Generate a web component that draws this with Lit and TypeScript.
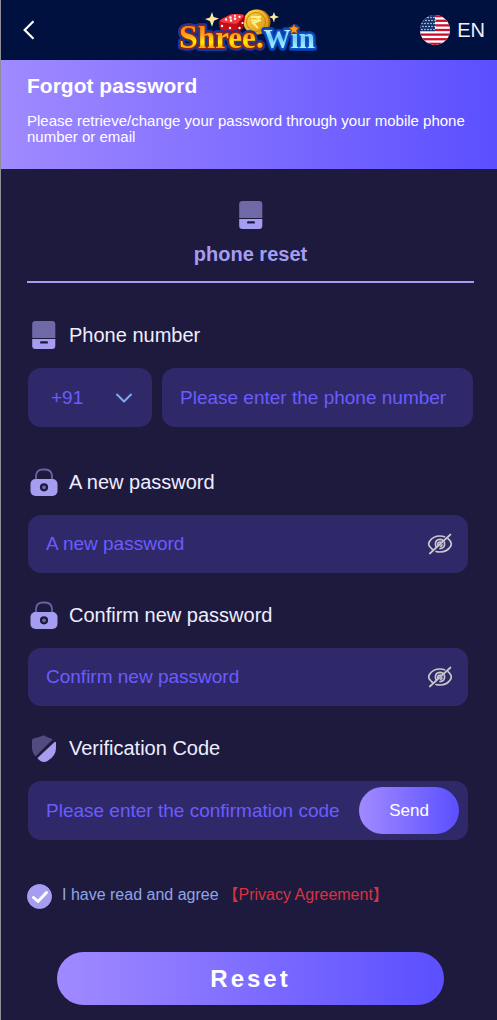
import { LitElement, html, svg, css, nothing } from "lit";
import { customElement, property, state } from "lit/decorators.js";

type IconName = "phone" | "lock" | "shield";

const icons = {
  phone: svg`
    <path fill="#7069a8" d="M5.500 0H22q3.300 0 3.300 3.300V17H2.200V3.300Q2.200 0 5.500 0z"/>
    <path fill="#a59df0" d="M2.200 18h23.100v6.700q0 3.300-3.300 3.300H5.500q-3.300 0-3.300-3.300z"/>
    <rect x="10" y="20.200" width="8" height="2.400" rx="1.200" fill="#1e1a3e"/>`,
  lock: svg`
    <path d="M6 11V8.500q0-7 7-7h2q7 0 7 7V11" fill="none" stroke="#6a61a4" stroke-width="1.800"/>
    <rect x="0.500" y="11" width="27" height="17" rx="5" fill="#a59df0"/>
    <circle cx="14" cy="19.300" r="3" fill="#7069a8" stroke="#1e1a3e" stroke-width="2.200"/>`,
  shield: svg`
    <path fill="#524b80" d="M13.800 1.300Q17 3.500 22.800 5.200L5.500 22.500Q2 18.500 2 14V6.500Q2 4.500 4 4.200 9.500 3.300 13.800 1.300z"/>
    <path fill="#a59df0" d="M24.300 8.200Q26 7 26 9v5q0 8-8.500 13-3.500 2-7 0L8 25q-.7-.7 0-1.400z"/>`,
};

@customElement("field-icon")
class FieldIcon extends LitElement {
  @property() name: IconName = "phone";

  static styles = css`
    :host { display: block; width: 28px; height: 28px; flex: none; }
    svg { display: block; }
  `;

  render() {
    return html`<svg width="28" height="28" viewBox="0 0 28 28" aria-hidden="true">${icons[this.name]}</svg>`;
  }
}

@customElement("brand-logo")
class BrandLogo extends LitElement {
  static styles = css`
    :host { display: block; }
    svg { display: block; }
    .word {
      font-family: "Liberation Serif", serif; font-weight: 700;
      paint-order: stroke; stroke-width: 3px; stroke-linejoin: round;
      filter: drop-shadow(1px 0 0 #0a3aa8) drop-shadow(-1px 0 0 #0a3aa8)
        drop-shadow(0 1px 0 #0a3aa8) drop-shadow(0 -1px 0 #0a3aa8);
    }
    .cap { font-size: 34px; }
    .low { font-size: 31px; }
    .win-cap { font-size: 27px; }
    .win-low { font-size: 29px; }
    .gold { fill: url(#gold); stroke: #8b2512; }
    .ice { fill: url(#ice); stroke: #0c56c4; }
  `;

  render() {
    return html`<svg width="150" height="56" viewBox="0 0 150 56" role="img" aria-label="Shree.Win">
      <defs>
        <linearGradient id="gold" gradientUnits="userSpaceOnUse" x1="0" y1="23" x2="0" y2="46">
          <stop offset="0" stop-color="#ff7d18"/><stop offset=".45" stop-color="#ffa31c"/>
          <stop offset=".75" stop-color="#fff000"/><stop offset="1" stop-color="#ff9a10"/>
        </linearGradient>
        <linearGradient id="ice" gradientUnits="userSpaceOnUse" x1="0" y1="25" x2="0" y2="46">
          <stop offset="0" stop-color="#d8faff"/><stop offset=".5" stop-color="#70cdfa"/>
          <stop offset="1" stop-color="#a8f2ff"/>
        </linearGradient>
        <linearGradient id="coin" x1="0" y1="0" x2="1" y2="1">
          <stop offset="0" stop-color="#ffdf50"/><stop offset="1" stop-color="#d98a08"/>
        </linearGradient>
      </defs>
      <path d="M36 10l1.600 5 5.400 1.600-5 2.200-2 6-2-5.500-5-2.300 5-1.500z" fill="#ffe9a0"/>
      <path d="M98 10l1.200 3.500L103 15l-4 1.500-1 4-1.500-4L93 15l3.700-1.500z" fill="#ffe9a0"/>
      <circle cx="82" cy="20" r="12.500" fill="#b96c05"/>
      <circle cx="80" cy="20" r="12.500" fill="url(#coin)"/>
      <circle cx="80" cy="20" r="9.500" fill="none" stroke="#c98208"/>
      <path d="M75 15h10M75 18.500h10M78 15q5 0 5 2.500t-6 3.500l5 5" fill="none" stroke="#fff08a" stroke-width="1.800"/>
      <path d="M43 20q0-2 3-3.500l8-4q2-.8 5-.5l7 .5q3 .3 3 3l-1.500 9q-.5 2-2 3L60 32 45 30q-2-6-2-10z" fill="#c60e18"/>
      <path d="M45 17.500l10-5q2-.6 4-.5l7 .6q2.500.4 1 2.400l-5 5.500q-1.500 1.500-4 1.200l-12-1.500q-3-.8-1-2.700z" fill="#f23c40"/>
      <path d="M62 22l6.500-7.500-1.500 10.500q-.4 2-2 3L60 31.500z" fill="#a5060f"/>
      <g fill="#fff">
        <circle cx="50" cy="17.500" r="1.200"/><circle cx="54.500" cy="15.500" r="1.200"/><circle cx="59" cy="13.800" r="1.100"/>
        <circle cx="55" cy="18.500" r="1.200"/><circle cx="59" cy="16.800" r="1.200"/><circle cx="63.500" cy="14.800" r="1.100"/>
        <circle cx="46" cy="24" r="1.200"/><circle cx="54" cy="26" r="1.200"/>
        <circle cx="66.500" cy="21" r="1.100"/><circle cx="63.500" cy="26" r="1.200"/>
      </g>
      <text class="word" x="3" y="46"><tspan class="cap gold">S</tspan><tspan class="low gold">hree.</tspan><tspan class="win-cap ice">W</tspan><tspan class="win-low ice">in</tspan></text>
      <path d="M118 22l1.500 3 4 .5-3 2.500 1 4-3.500-2-3.500 2 1-4-3-2.500 4-.5z" fill="#ff9a1c" stroke="#7c3110" stroke-width=".7"/>
    </svg>`;
  }
}

@customElement("password-field")
class PasswordField extends LitElement {
  @property() label = "";
  @state() private shown = false;

  static styles = css`
    :host { display: block; margin-right: 5px; }
    .label { display: flex; align-items: center; gap: 11px; padding-left: 2px; height: 28px; margin-bottom: 19px; color: #eef; font-size: 20px; }
    .box { display: flex; align-items: center; height: 58px; border-radius: 13px; background: #2f2969; padding: 0 15px 0 18px; }
    input { flex: 1; min-width: 0; border: 0; outline: 0; padding: 0; background: none; font: inherit; font-size: 19px; color: #6a5cff; }
    input::placeholder { color: #6a5cff; opacity: 1; }
    button { border: 0; padding: 0; background: none; width: 26px; height: 24px; cursor: pointer; }
    svg { display: block; }
  `;

  render() {
    return html`
      <label class="label" for="pw"><field-icon name="lock"></field-icon>${this.label}</label>
      <div class="box">
        <input id="pw" type=${this.shown ? "text" : "password"} placeholder=${this.label} />
        <button type="button" aria-label="Show password" @click=${() => (this.shown = !this.shown)}>
          <svg width="26" height="24" viewBox="0 0 26 24" fill="none" stroke="#c9c7cb" stroke-width="1.700" stroke-linecap="round">
            <path d="M17.500 4.800Q15.500 4 13 4 6 4 2.500 9.500 1 12 2.500 14.200 3.500 16 5.500 17.500M9 19.500Q11 20 13 20q7 0 10.500-5.500 1.500-2.500 0-5Q22.500 8 21 6.700"/>
            <path d="M15.800 8.200Q14.500 7.400 13 7.400 8.500 7.700 8.400 12q0 1.500.8 2.800M17.400 10.200Q18.500 16 13 16.700"/>
            <path d="M13.500 10q-3 0-2.700 2.800M15 13q-.5 1-1.500 1.300"/>
            <path d="M23.500 2.500L2.800 21.500"/>
          </svg>
        </button>
      </div>`;
  }
}

@customElement("app-root")
class AppRoot extends LitElement {
  @state() private agreed = true;

  static styles = css`
    :host {
      display: block; box-sizing: border-box; min-height: 100vh;
      border-left: 1px solid #8e8e98; background: #1e1a3e; color: #fff;
      font-family: "Liberation Sans", Arial, sans-serif;
    }
    * { box-sizing: border-box; }
    svg { display: block; }
    header { display: grid; grid-template-columns: 1fr auto 1fr; align-items: center; height: 60px; padding: 0 12px 0 16px; background: #001140; }
    button { font-family: inherit; color: inherit; border: 0; padding: 0; cursor: pointer; }
    .back { background: none; width: 24px; height: 24px; }
    .lang { display: flex; align-items: center; justify-self: end; gap: 7px; background: none; font-size: 20px; color: #eef2ff; }
    .banner { padding: 15px 27px 24px 26px; background: linear-gradient(90deg, #a18aff, #5b4fff); }
    h1 { margin: 0 0 16px; font-size: 21px; line-height: 22px; }
    .banner p { margin: 0; font-size: 15px; line-height: 16px; }
    main { padding: 32px 24px 15px 27px; }
    .tab { display: flex; flex-direction: column; align-items: center; gap: 14px; height: 82px; margin: 0 -1px; border-bottom: 2px solid #a59df0; color: #a59df0; font-size: 20px; font-weight: 700; line-height: 23px; }
    .label { display: flex; align-items: center; gap: 11px; padding-left: 2px; height: 28px; margin-bottom: 19px; color: #eef; font-size: 20px; }
    form { display: flex; flex-direction: column; gap: 28px; padding-top: 38px; }
    .phone { padding-bottom: 13px; }
    .row { display: grid; grid-template-columns: 124px 1fr; gap: 10px; }
    .box { display: flex; align-items: center; height: 59px; border-radius: 13px; background: #2f2969; padding: 0 9px 0 18px; }
    .country { display: grid; grid-template-columns: 1fr 20px 18px; height: 59px; align-items: center; border-radius: 13px; background: #2f2969; }
    select { grid-area: 1 / 1 / 2 / 4; height: 59px; padding: 0 0 0 23px; border: 0; border-radius: 13px; appearance: none; background: none; font: inherit; font-size: 19px; color: #6a5cff; }
    .chevron { grid-area: 1 / 2; pointer-events: none; }
    .box input { flex: 1; min-width: 0; border: 0; outline: 0; padding: 0; background: none; font: inherit; font-size: 19px; color: #6a5cff; }
    .box input::placeholder { color: #6a5cff; opacity: 1; }
    .verify { margin-right: 5px; }
    .send { width: 100px; height: 47px; border-radius: 24px; background: linear-gradient(90deg, #a18aff, #5b4fff); font-size: 17px; }
    .agree { display: flex; align-items: center; margin: 15px 0 0 -1px; height: 26px; font-size: 16px; line-height: 24px; color: #8fa5e8; }
    .tick { display: grid; margin-right: 10px; }
    .tick input { grid-area: 1 / 1; appearance: none; width: 25px; height: 25px; margin: 0; border-radius: 50%; border: 1px solid #a59df0; }
    .tick input:checked { background: #a59df0; }
    .tick svg { grid-area: 1 / 1; pointer-events: none; }
    .terms { display: flex; align-items: baseline; gap: 4px; height: 26px; }
    .terms a { color: #d9333f; text-decoration: none; font-family: "Liberation Sans", "Noto Sans CJK SC", sans-serif; }
    .reset { height: 53px; margin: 15px 29px 0; border-radius: 27px; background: linear-gradient(90deg, #a18aff, #5b4fff); font-size: 24px; font-weight: 700; letter-spacing: 3px; }
  `;

  private flag() {
    const stripes = [0, 2, 4, 6, 8, 10, 12];
    const stars = [];
    for (let r = 0; r < 5; r++)
      for (let c = 0; c < 5; c++)
        stars.push(svg`<circle cx=${2 + c * 3 + (r % 2)} cy=${2.5 + r * 3} r=".7" fill="#fff"/>`);
    return html`<svg width="30" height="30" viewBox="0 0 30 30" aria-hidden="true">
      <clipPath id="round"><circle cx="15" cy="15" r="15"/></clipPath>
      <g clip-path="url(#round)">
        <rect width="30" height="30" fill="#fff"/>
        ${stripes.map((i) => svg`<rect y=${(i * 30) / 13} width="30" height=${30 / 13} fill="#c8102e"/>`)}
        <rect width="15" height="16.150" fill="#12306b"/>${stars}
      </g>
    </svg>`;
  }

  render() {
    return html`
      <header>
        <button class="back" aria-label="Back">
          <svg width="24" height="24" viewBox="0 0 24 24" fill="none" stroke="#fff" stroke-width="2.200"><path d="M16.500 3.300L7.700 12l8.800 8.700"/></svg>
        </button>
        <brand-logo></brand-logo>
        <button class="lang">${this.flag()}<span>EN</span></button>
      </header>
      <section class="banner">
        <h1>Forgot password</h1>
        <p>Please retrieve/change your password through your mobile phone number or email</p>
      </section>
      <main>
        <div class="tab"><field-icon name="phone"></field-icon><span>phone reset</span></div>
        <form @submit=${(e: Event) => e.preventDefault()}>
          <div class="phone">
            <label class="label" for="phone"><field-icon name="phone"></field-icon>Phone number</label>
            <div class="row">
              <div class="country">
                <select aria-label="Country code"><option>+91</option></select>
                <svg class="chevron" width="20" height="20" viewBox="0 0 20 20" fill="none" stroke="#86a8f4" stroke-width="2" stroke-linecap="round" stroke-linejoin="round"><path d="M3 6.500l7 7 7-7"/></svg>
              </div>
              <div class="box"><input id="phone" type="tel" placeholder="Please enter the phone number" /></div>
            </div>
          </div>
          <password-field label="A new password"></password-field>
          <password-field label="Confirm new password"></password-field>
          <div class="verify">
            <label class="label" for="code"><field-icon name="shield"></field-icon>Verification Code</label>
            <div class="box">
              <input id="code" placeholder="Please enter the confirmation code" />
              <button type="button" class="send">Send</button>
            </div>
          </div>
          <div class="agree">
            <span class="tick">
              <input id="agree" type="checkbox" .checked=${this.agreed} @change=${(e: Event) => (this.agreed = (e.target as HTMLInputElement).checked)} />
              ${this.agreed
                ? html`<svg width="25" height="25" viewBox="0 0 25 25" fill="none" stroke="#fff" stroke-width="3" stroke-linecap="round" stroke-linejoin="round"><path d="M6.500 13.500l4.500 4 8.500-9"/></svg>`
                : nothing}
            </span>
            <div class="terms">
              <label for="agree">I have read and agree</label>
              <a href="#privacy">【Privacy Agreement】</a>
            </div>
          </div>
          <button class="reset">Reset</button>
        </form>
      </main>`;
  }
}
